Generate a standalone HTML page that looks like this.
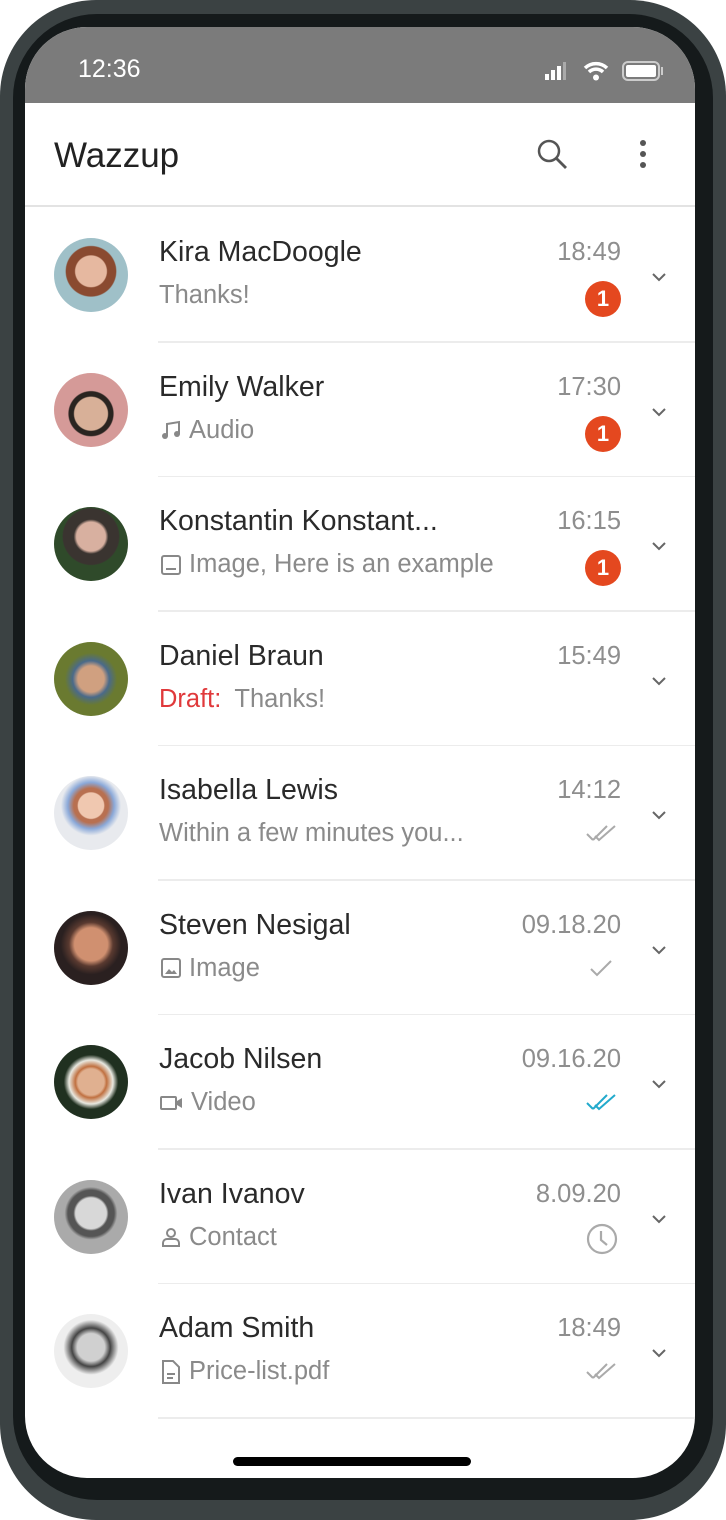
<!DOCTYPE html>
<html><head><meta charset="utf-8"><style>
*{margin:0;padding:0;box-sizing:border-box}
body{width:726px;height:1520px;background:#fff;overflow:hidden;font-family:"Liberation Sans",sans-serif}
.frame{position:absolute;left:0;top:0;width:726px;height:1520px;background:#3b4243;border-radius:96px}
.bezel{position:absolute;left:13px;top:14px;width:700px;height:1486px;background:#151a1b;border-radius:84px}
.screen{position:absolute;left:25px;top:27px;width:670px;height:1451px;background:#fff;border-radius:62px;overflow:hidden}
.status{position:absolute;left:0;top:0;width:670px;height:76px;background:#7b7b7b}
.time{position:absolute;left:53px;top:28px;color:#fff;font-size:25px}
.header{position:absolute;left:0;top:76px;width:670px;height:104px;border-bottom:2px solid #e3e3e3}
.title{position:absolute;left:29px;top:33px;font-size:35px;color:#222}
.row{position:absolute;left:0;width:670px;height:134.5px}
.row .line{position:absolute;left:133px;right:0;bottom:0;height:1.5px;background:#ececec}
.av{position:absolute;left:29px;top:30px;width:74px;height:74px;border-radius:50%}
.name{position:absolute;left:134px;top:28px;font-size:28.5px;color:#2a2a2a}
.msg{position:absolute;left:134px;top:73px;font-size:25.5px;color:#8a8a8a;display:flex;align-items:center;gap:6px}
.tm{position:absolute;right:74px;top:30px;font-size:25.5px;color:#8e8e8e}
.badge{position:absolute;left:560px;top:73px;width:36px;height:36px;border-radius:50%;background:#e4481f;color:#fff;font-size:22px;font-weight:bold;text-align:center;line-height:36px}
.chev{position:absolute;left:626px;top:63px}
.st{position:absolute;left:560px;top:76px}
.home{position:absolute;left:208px;top:1430px;width:238px;height:9px;border-radius:5px;background:#000}
</style></head><body>
<div class="frame"></div><div class="bezel"></div>
<div class="screen">
<div class="status"><div class="time">12:36</div>
<svg style="position:absolute;left:518px;top:32px" width="150" height="24"><rect x="2" y="15" width="4" height="6" fill="#fff"/><rect x="8" y="11" width="4" height="10" fill="#fff"/><rect x="14" y="7" width="4" height="14" fill="#fff"/><rect x="20" y="3" width="3" height="18" fill="#aaa"/>
<path d="M42 9a16 16 0 0 1 22 0M46 13a10 10 0 0 1 14 0" stroke="#fff" stroke-width="3.5" fill="none"/><circle cx="53" cy="18.5" r="3" fill="#fff"/>
<rect x="80" y="3" width="36" height="18" rx="5" fill="none" stroke="#ccc" stroke-width="2"/><rect x="83" y="6" width="30" height="12" rx="2" fill="#fff"/><rect x="118" y="8" width="2" height="8" fill="#ccc"/></svg>
</div>
<div class="header"><div class="title">Wazzup</div>
<svg style="position:absolute;left:510px;top:34px" width="36" height="36"><circle cx="14" cy="14" r="10" fill="none" stroke="#555" stroke-width="2.5"/><path d="M21 21l10 10" stroke="#555" stroke-width="2.8"/></svg>
<svg style="position:absolute;left:610px;top:36px" width="16" height="34"><circle cx="8" cy="4" r="3" fill="#555"/><circle cx="8" cy="15" r="3" fill="#555"/><circle cx="8" cy="26" r="3" fill="#555"/></svg>
</div>

<div class="row" style="top:181px"><div class="av" style="background:radial-gradient(circle at 50% 45%,#e6b8a0 0 28%,#8a4a30 30% 45%,#9fc0c8 47%)"></div><div class="name">Kira MacDoogle</div><div class="msg">Thanks!</div><div class="tm">18:49</div><div class="badge">1</div><svg class="chev" width="16" height="12"><path d="M2 3l6 6 6-6" stroke="#666" stroke-width="2" fill="none"/></svg><div class="line"></div></div>

<div class="row" style="top:315.5px"><div class="av" style="background:radial-gradient(circle at 50% 55%,#d8b098 0 30%,#2a2420 32% 40%,#d59a98 42%)"></div><div class="name">Emily Walker</div><div class="msg"><svg width="24" height="24"><path d="M8 18V6l12-2v12" stroke="#888" stroke-width="2" fill="none"/><circle cx="6" cy="18" r="3" fill="#888"/><circle cx="18" cy="16" r="3" fill="#888"/></svg>Audio</div><div class="tm">17:30</div><div class="badge">1</div><svg class="chev" width="16" height="12"><path d="M2 3l6 6 6-6" stroke="#666" stroke-width="2" fill="none"/></svg><div class="line"></div></div>

<div class="row" style="top:450px"><div class="av" style="background:radial-gradient(circle at 50% 40%,#d8b0a0 0 25%,#3a3430 30% 48%,#2f4a2a 50%)"></div><div class="name">Konstantin Konstant...</div><div class="msg"><svg width="24" height="24"><rect x="3" y="3" width="18" height="18" rx="2" stroke="#888" stroke-width="2" fill="none"/><path d="M7 16h10" stroke="#888" stroke-width="2"/></svg>Image, Here is an example</div><div class="tm">16:15</div><div class="badge">1</div><svg class="chev" width="16" height="12"><path d="M2 3l6 6 6-6" stroke="#666" stroke-width="2" fill="none"/></svg><div class="line"></div></div>

<div class="row" style="top:584.5px"><div class="av" style="background:radial-gradient(circle at 50% 50%,#d0a080 0 25%,#4a6a8a 35%,#6a7a30 50%)"></div><div class="name">Daniel Braun</div><div class="msg"><span style="color:#e0393b">Draft:</span>&nbsp;Thanks!</div><div class="tm">15:49</div><svg class="chev" width="16" height="12"><path d="M2 3l6 6 6-6" stroke="#666" stroke-width="2" fill="none"/></svg><div class="line"></div></div>

<div class="row" style="top:719px"><div class="av" style="background:radial-gradient(circle at 50% 40%,#f0c8b0 0 22%,#b87050 24% 30%,#8aa8d8 40%,#e8eaee 52%)"></div><div class="name">Isabella Lewis</div><div class="msg">Within a few minutes you...</div><div class="tm">14:12</div><svg class="st" width="36" height="24"><path d="M2 12l6 6M8 18l14-14M10 14l4 4 16-14" stroke="#aaa" stroke-width="2" fill="none"/></svg><svg class="chev" width="16" height="12"><path d="M2 3l6 6 6-6" stroke="#666" stroke-width="2" fill="none"/></svg><div class="line"></div></div>

<div class="row" style="top:853.5px"><div class="av" style="background:radial-gradient(circle at 50% 45%,#d09070 0 30%,#5a3a30 40%,#2a2020 55%)"></div><div class="name">Steven Nesigal</div><div class="msg"><svg width="24" height="24"><rect x="3" y="3" width="18" height="18" rx="2" stroke="#888" stroke-width="2" fill="none"/><path d="M6 18l4-5 3 3 2-2 3 4z" fill="#888"/></svg>Image</div><div class="tm">09.18.20</div><svg class="st" width="36" height="24"><path d="M6 12l6 6 14-14" stroke="#aaa" stroke-width="2" fill="none"/></svg><svg class="chev" width="16" height="12"><path d="M2 3l6 6 6-6" stroke="#666" stroke-width="2" fill="none"/></svg><div class="line"></div></div>

<div class="row" style="top:988px"><div class="av" style="background:radial-gradient(circle at 50% 50%,#e0b090 0 25%,#c07040 30%,#e8e8e0 42%,#203020 52%)"></div><div class="name">Jacob Nilsen</div><div class="msg"><svg width="26" height="24"><rect x="2" y="6" width="15" height="12" rx="1" stroke="#888" stroke-width="2" fill="none"/><path d="M18 10l5-3v10l-5-3z" fill="#888"/></svg>Video</div><div class="tm">09.16.20</div><svg class="st" width="36" height="24"><path d="M2 12l6 6M8 18l14-14M10 14l4 4 16-14" stroke="#22aacc" stroke-width="2" fill="none"/></svg><svg class="chev" width="16" height="12"><path d="M2 3l6 6 6-6" stroke="#666" stroke-width="2" fill="none"/></svg><div class="line"></div></div>

<div class="row" style="top:1122.5px"><div class="av" style="background:radial-gradient(circle at 50% 45%,#d8d8d8 0 28%,#555 32% 42%,#aaa 48%)"></div><div class="name">Ivan Ivanov</div><div class="msg"><svg width="24" height="24"><circle cx="12" cy="8" r="4" stroke="#888" stroke-width="2" fill="none"/><path d="M4 21v-3a4 4 0 0 1 4-4h8a4 4 0 0 1 4 4v3z" stroke="#888" stroke-width="2" fill="none"/></svg>Contact</div><div class="tm">8.09.20</div><svg class="st" width="36" height="36" style="top:72px"><circle cx="17" cy="17" r="14" stroke="#aaa" stroke-width="2.2" fill="none"/><path d="M16 9v9l6 5" stroke="#aaa" stroke-width="2.2" fill="none"/></svg><svg class="chev" width="16" height="12"><path d="M2 3l6 6 6-6" stroke="#666" stroke-width="2" fill="none"/></svg><div class="line"></div></div>

<div class="row" style="top:1257px"><div class="av" style="background:radial-gradient(circle at 50% 45%,#d0d0d0 0 25%,#444 35%,#eee 50%)"></div><div class="name">Adam Smith</div><div class="msg"><svg width="24" height="26"><path d="M4 2h10l6 6v16H4z" stroke="#888" stroke-width="2" fill="none"/><path d="M8 15h8M8 19h6" stroke="#888" stroke-width="2"/></svg>Price-list.pdf</div><div class="tm">18:49</div><svg class="st" width="36" height="24"><path d="M2 12l6 6M8 18l14-14M10 14l4 4 16-14" stroke="#aaa" stroke-width="2" fill="none"/></svg><svg class="chev" width="16" height="12"><path d="M2 3l6 6 6-6" stroke="#666" stroke-width="2" fill="none"/></svg><div class="line"></div></div>

<div class="home"></div>
</div>
</body></html>
